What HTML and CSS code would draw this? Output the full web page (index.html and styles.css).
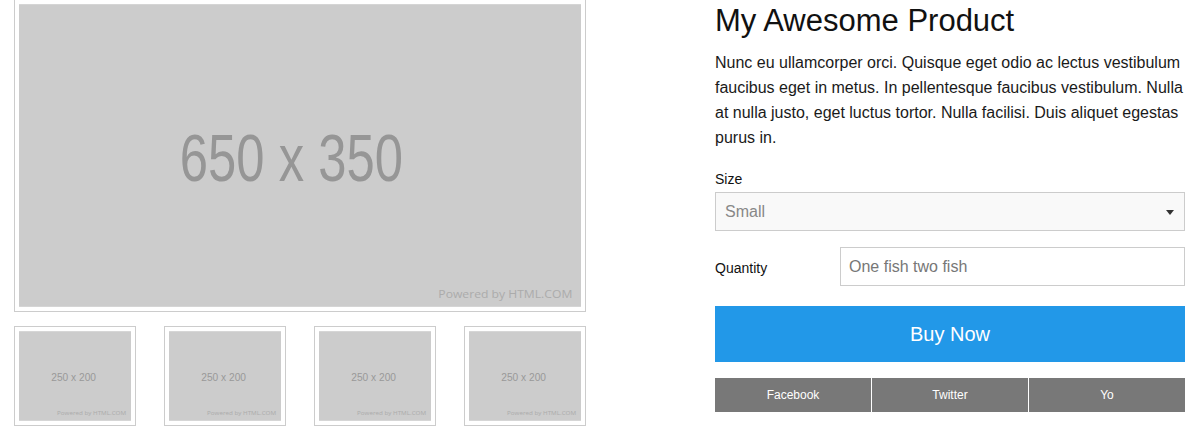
FILE: index.html
```html
<!DOCTYPE html>
<html lang="en">
<head>
<meta charset="utf-8">
<title>My Awesome Product</title>
<link rel="stylesheet" href="styles.css">
</head>
<body>
<div class="product">
  <div class="gallery">
    <div class="frame main-frame">
      <svg class="ph main-ph" viewBox="0 0 650 350" width="562" height="303">
        <rect width="650" height="350" fill="#cccccc"/>
        <text class="ph-big" x="186" y="205" font-size="77" textLength="258" lengthAdjust="spacingAndGlyphs">650 x 350</text>
        <text class="ph-small" x="485" y="340" font-size="13.3" textLength="155" lengthAdjust="spacingAndGlyphs">Powered by HTML.COM</text>
      </svg>
    </div>
    <div class="thumbs">
      <div class="frame thumb">
        <svg class="ph" viewBox="0 0 250 200" width="112" height="90">
          <rect width="250" height="200" fill="#cccccc"/>
          <text class="ph-mid" x="72" y="111" font-size="25" textLength="100" lengthAdjust="spacingAndGlyphs">250 x 200</text>
          <text class="ph-small" x="85" y="187" font-size="13" textLength="154" lengthAdjust="spacingAndGlyphs">Powered by HTML.COM</text>
        </svg>
      </div>
      <div class="frame thumb">
        <svg class="ph" viewBox="0 0 250 200" width="112" height="90">
          <rect width="250" height="200" fill="#cccccc"/>
          <text class="ph-mid" x="72" y="111" font-size="25" textLength="100" lengthAdjust="spacingAndGlyphs">250 x 200</text>
          <text class="ph-small" x="85" y="187" font-size="13" textLength="154" lengthAdjust="spacingAndGlyphs">Powered by HTML.COM</text>
        </svg>
      </div>
      <div class="frame thumb">
        <svg class="ph" viewBox="0 0 250 200" width="112" height="90">
          <rect width="250" height="200" fill="#cccccc"/>
          <text class="ph-mid" x="72" y="111" font-size="25" textLength="100" lengthAdjust="spacingAndGlyphs">250 x 200</text>
          <text class="ph-small" x="85" y="187" font-size="13" textLength="154" lengthAdjust="spacingAndGlyphs">Powered by HTML.COM</text>
        </svg>
      </div>
      <div class="frame thumb">
        <svg class="ph" viewBox="0 0 250 200" width="112" height="90">
          <rect width="250" height="200" fill="#cccccc"/>
          <text class="ph-mid" x="72" y="111" font-size="25" textLength="100" lengthAdjust="spacingAndGlyphs">250 x 200</text>
          <text class="ph-small" x="85" y="187" font-size="13" textLength="154" lengthAdjust="spacingAndGlyphs">Powered by HTML.COM</text>
        </svg>
      </div>
    </div>
  </div>
  <div class="details">
    <h1 class="title">My Awesome Product</h1>
    <p class="desc">Nunc eu ullamcorper orci. Quisque eget odio ac lectus vestibulum faucibus eget in metus. In pellentesque faucibus vestibulum. Nulla at nulla justo, eget luctus tortor. Nulla facilisi. Duis aliquet egestas purus in.</p>
    <label class="field-label" for="size">Size</label>
    <div class="select-wrap">
      <select id="size" class="select">
        <option>Small</option>
        <option>Medium</option>
        <option>Large</option>
      </select>
    </div>
    <div class="qty-row">
      <label class="qty-label" for="qty">Quantity</label>
      <input id="qty" class="qty-input" type="text" placeholder="One fish two fish">
    </div>
    <button class="buy" type="button">Buy Now</button>
    <div class="share">
      <a class="share-item">Facebook</a>
      <a class="share-item">Twitter</a>
      <a class="share-item">Yo</a>
    </div>
  </div>
</div>
</body>
</html>
```

FILE: styles.css
```css
* { box-sizing: border-box; }

html, body {
  margin: 0;
  padding: 0;
  background: #ffffff;
}

body {
  font-family: "Liberation Sans", Arial, sans-serif;
  color: #111111;
}

.product {
  display: flex;
  align-items: flex-start;
  padding-left: 14px;
  gap: 129px;
}

.gallery {
  width: 572px;
  margin-top: -1px;
  display: flex;
  flex-direction: column;
  gap: 14px;
}

.frame {
  border: 1px solid #cccccc;
  padding: 4px;
  background: #ffffff;
}

.ph {
  display: block;
}

.ph-big,
.ph-mid {
  font-family: "Liberation Sans", Arial, sans-serif;
  fill: #969696;
}

.ph-mid {
  fill: #999999;
}

.ph-small {
  font-family: "Open Sans", "DejaVu Sans", sans-serif;
  fill: #ababab;
}

.thumbs {
  display: flex;
  justify-content: space-between;
}

.details {
  width: 470px;
  display: flex;
  flex-direction: column;
}

.title {
  margin: 0;
  font-size: 31px;
  line-height: 42px;
  font-weight: normal;
  color: #111111;
}

.desc {
  margin: 8px 0 0;
  font-size: 16px;
  line-height: 25px;
  color: #1a1a1a;
}

.field-label {
  margin-top: 21px;
  font-size: 14px;
  line-height: 17px;
  color: #111111;
}

.select-wrap {
  position: relative;
  margin-top: 4px;
}

.select-wrap::after {
  content: "";
  position: absolute;
  right: 11px;
  top: 18px;
  width: 0;
  height: 0;
  border-left: 4px solid transparent;
  border-right: 4px solid transparent;
  border-top: 5px solid #333333;
  pointer-events: none;
}

.select {
  -webkit-appearance: none;
  appearance: none;
  display: block;
  width: 100%;
  height: 39px;
  margin: 0;
  border: 1px solid #cccccc;
  border-radius: 0;
  background: #f9f9f9;
  padding: 0 9px;
  font-family: "Liberation Sans", Arial, sans-serif;
  font-size: 16px;
  color: #888888;
  outline: none;
}

.qty-row {
  display: flex;
  align-items: center;
  margin-top: 16px;
}

.qty-label {
  width: 125px;
  flex: none;
  padding-top: 3px;
  font-size: 14px;
  line-height: 17px;
  color: #111111;
}

.qty-input {
  flex: 1;
  min-width: 0;
  height: 39px;
  margin: 0;
  border: 1px solid #cccccc;
  border-radius: 0;
  padding: 0 8px;
  background: #ffffff;
  font-family: "Liberation Sans", Arial, sans-serif;
  font-size: 16px;
  color: #111111;
  outline: none;
}

.qty-input::placeholder {
  color: #777777;
  opacity: 1;
}

.buy {
  margin-top: 20px;
  height: 56px;
  width: 100%;
  border: 0;
  border-radius: 0;
  background: #2298e8;
  color: #ffffff;
  font-family: "Liberation Sans", Arial, sans-serif;
  font-size: 20px;
  cursor: pointer;
}

.share {
  display: flex;
  margin-top: 16px;
  height: 34px;
  background: #787878;
}

.share-item {
  flex: 1;
  display: flex;
  align-items: center;
  justify-content: center;
  font-size: 12px;
  color: #ffffff;
  text-decoration: none;
}

.share-item + .share-item {
  border-left: 1px solid #ffffff;
}
```
